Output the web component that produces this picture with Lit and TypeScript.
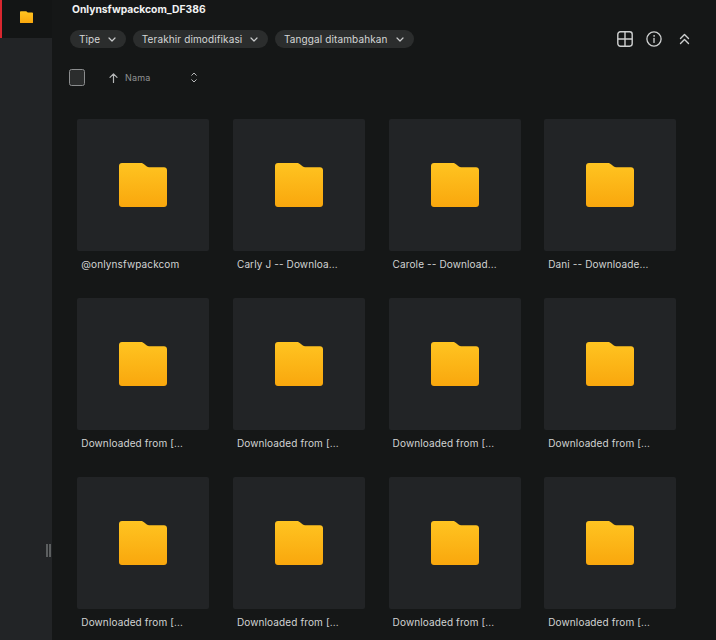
import { LitElement, html, css, svg } from 'lit';
import { customElement } from 'lit/decorators.js';

const NAMES = [
  '@onlynsfwpackcom',
  'Carly J -- Downloa...',
  'Carole -- Download...',
  'Dani -- Downloade...',
  ...Array(8).fill('Downloaded from [...'),
];

const CHIPS = ['Tipe', 'Terakhir dimodifikasi', 'Tanggal ditambahkan'];

const folder = (cls: string, id: string) => html`
  <svg class=${cls} viewBox="0 0 48 44">
    <defs>
      <linearGradient id=${id} x1="0" y1="0" x2="0" y2="1">
        <stop offset="0" stop-color="#ffc421" />
        <stop offset="1" stop-color="#f9a70d" />
      </linearGradient>
    </defs>
    ${svg`<path fill="url(#${id})" d="M3 0H21.5C23 0 24 .5 25 1.3L27.5 3.2C28.5 4 29.5 4.3 31 4.3H45C46.8 4.3 48 5.5 48 7.3V41C48 42.8 46.8 44 45 44H3C1.2 44 0 42.8 0 41V3C0 1.2 1.2 0 3 0Z" />`}
  </svg>
`;

const chevron = html`
  <svg class="chev" viewBox="0 0 8 5" fill="none" stroke="#c9cbcc" stroke-width="1.2" stroke-linecap="round" stroke-linejoin="round">
    <path d="M1 1L4 4L7 1" />
  </svg>
`;

@customElement('app-root')
export class AppRoot extends LitElement {
  static styles = css`
    :host {
      display: flex;
      height: 640px;
      overflow: hidden;
      position: relative;
      background: #151717;
      font-family: Inter, "Liberation Sans", sans-serif;
    }
    * {
      box-sizing: border-box;
    }
    .side {
      width: 52px;
      flex: none;
      background: #222426;
    }
    .side-item {
      height: 38px;
      background: #131515;
      border-left: 2px solid #d8272f;
      display: flex;
      align-items: center;
      justify-content: center;
      padding-right: 2px;
      padding-bottom: 4px;
    }
    .side-folder {
      width: 13px;
      height: 12.5px;
    }
    .handle {
      position: absolute;
      left: 46px;
      top: 544px;
      width: 5px;
      height: 13px;
      border-left: 2px solid #5c5f60;
      border-right: 2px solid #5c5f60;
    }
    .main {
      flex: 1;
      min-width: 0;
      padding: 3px 40px 0 17px;
    }
    .title {
      margin-left: 3px;
      height: 13px;
      line-height: 13px;
      font-size: 10.3px;
      font-weight: 700;
      color: #f1f2f2;
    }
    .bar {
      display: flex;
      align-items: center;
      margin-top: 14px;
      height: 18px;
    }
    .chips {
      display: flex;
      gap: 6.5px;
      margin-left: 1px;
    }
    .chip {
      height: 18px;
      display: flex;
      align-items: center;
      gap: 8px;
      padding: 0 10px 0 9px;
      border-radius: 9px;
      background: #2b2d2d;
      color: #d4d6d6;
      font-size: 10px;
      letter-spacing: .12px;
      white-space: nowrap;
    }
    .chev {
      width: 8px;
      height: 5px;
    }
    .tools {
      margin-left: auto;
      margin-right: -13.5px;
      display: flex;
      align-items: center;
      gap: 13px;
    }
    .tools svg {
      width: 16px;
      height: 16px;
      display: block;
    }
    .tools .up {
      margin-left: 3.5px;
      width: 11px;
    }
    .list-head {
      display: flex;
      align-items: center;
      margin-top: 21px;
      height: 17px;
      color: #8f9192;
      font-size: 9px;
      letter-spacing: .2px;
    }
    .check {
      width: 16px;
      height: 17px;
      border: 1px solid #8b8d8e;
      border-radius: 2.5px;
      background: #2b2d2d;
    }
    .arrow {
      width: 9px;
      height: 10px;
      margin-left: 24px;
    }
    .name {
      margin-left: 7px;
      width: 66px;
    }
    .sort {
      width: 6px;
      height: 11px;
    }
    .grid {
      display: grid;
      grid-template-columns: repeat(4, 132px);
      column-gap: 23.67px;
      row-gap: 21px;
      margin: 33px 0 0 8.3px;
    }
    .thumb {
      height: 132px;
      background: #222426;
      border-radius: 2px;
      display: flex;
      align-items: center;
      justify-content: center;
    }
    .thumb-folder {
      width: 48px;
      height: 44px;
      display: block;
    }
    .label {
      height: 20px;
      margin-top: 6px;
      padding-left: 4px;
      line-height: 14px;
      font-size: 10px;
      color: #d2d4d4;
      letter-spacing: .12px;
      white-space: nowrap;
    }
  `;

  render() {
    return html`
      <nav class="side">
        <div class="side-item">${folder('side-folder', 'fs')}</div>
      </nav>
      <div class="handle"></div>
      <main class="main">
        <div class="title">Onlynsfwpackcom_DF386</div>
        <div class="bar">
          <div class="chips">
            ${CHIPS.map((c) => html`<div class="chip">${c}${chevron}</div>`)}
          </div>
          <div class="tools">
            <svg viewBox="0 0 16 16" fill="none" stroke="#cfd1d1" stroke-width="1.4">
              <rect x=".8" y=".8" width="14.4" height="14.4" rx="2.6" />
              <path d="M8 1V15M1 8H15" />
            </svg>
            <svg viewBox="0 0 16 16" fill="none" stroke="#cfd1d1" stroke-width="1.3" stroke-linecap="round">
              <circle cx="8" cy="8" r="7.1" />
              <path d="M8 7.4V11.4" />
              <circle cx="8" cy="4.9" r=".5" fill="#cfd1d1" stroke-width=".6" />
            </svg>
            <svg class="up" viewBox="0 0 11 16" fill="none" stroke="#cfd1d1" stroke-width="1.4" stroke-linecap="round" stroke-linejoin="round">
              <path d="M1.5 7.5L5.5 3.5L9.5 7.5M1.5 12.5L5.5 8.5L9.5 12.5" />
            </svg>
          </div>
        </div>
        <div class="list-head">
          <div class="check"></div>
          <svg class="arrow" viewBox="0 0 9 10" fill="none" stroke="#b5b7b8" stroke-width="1.2" stroke-linecap="round" stroke-linejoin="round">
            <path d="M4.5 9.5V1M1 4.3L4.5 .8L8 4.3" />
          </svg>
          <span class="name">Nama</span>
          <svg class="sort" viewBox="0 0 6 11" fill="none" stroke="#b5b7b8" stroke-width="1" stroke-linecap="round" stroke-linejoin="round">
            <path d="M.7 3.3L3 1L5.3 3.3M.7 7.7L3 10L5.3 7.7" />
          </svg>
        </div>
        <div class="grid">
          ${NAMES.map(
            (n, i) => html`
              <div class="card">
                <div class="thumb">${folder('thumb-folder', `f${i}`)}</div>
                <div class="label">${n}</div>
              </div>
            `
          )}
        </div>
      </main>
    `;
  }
}
